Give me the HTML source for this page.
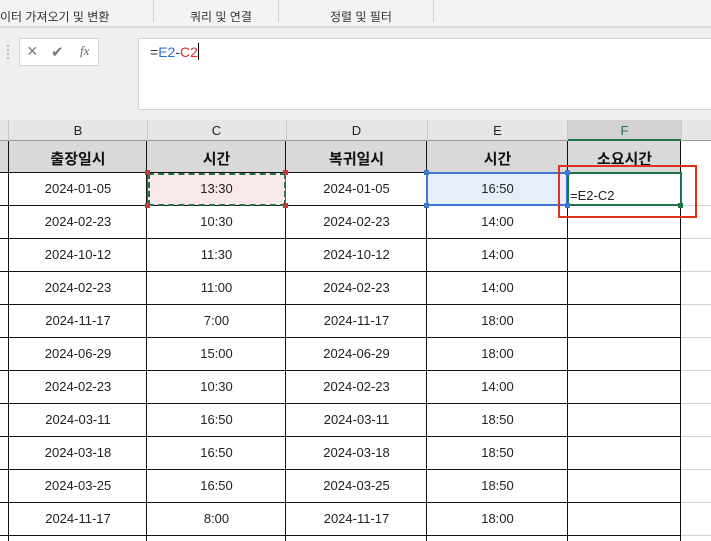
<!DOCTYPE html>
<html><head><meta charset="utf-8"><style>
*{margin:0;padding:0;box-sizing:border-box}
body{width:711px;height:537px;overflow:hidden;background:#fff;position:relative;font-family:"Liberation Sans","Noto Sans CJK KR",sans-serif}
.a{position:absolute}
.t{position:absolute;text-align:center;font-size:13px;color:#222}
</style></head><body>
<div class="a" style="left:0;top:0;width:711px;height:27px;background:#f3f3f3"></div>
<div class="a" style="left:0;top:26px;width:711px;height:2px;background:#dcdcdc"></div>
<div class="a" style="left:153px;top:0;width:1px;height:22px;background:#d0d0d0"></div>
<div class="a" style="left:278px;top:0;width:1px;height:22px;background:#d0d0d0"></div>
<div class="a" style="left:433px;top:0;width:1px;height:22px;background:#d0d0d0"></div>
<div class="t" style="left:0;top:8px;font-size:12px;color:#333">이터 가져오기 및 변환</div>
<div class="t" style="left:190px;top:8px;font-size:12px;color:#333">쿼리 및 연결</div>
<div class="t" style="left:330px;top:8px;font-size:12px;color:#333">정렬 및 필터</div>
<div class="a" style="left:0;top:28px;width:711px;height:92px;background:#efefef"></div>
<div class="a" style="left:7px;top:45px;width:2px;height:14px;border-left:2px dotted #bbb"></div>
<div class="a" style="left:19px;top:38px;width:80px;height:28px;background:#fff;border:1px solid #d6d6d6"></div>
<div class="t" style="left:27px;top:41px;font-size:18px;color:#777">×</div>
<div class="t" style="left:51px;top:43px;font-size:15px;color:#777">✔</div>
<div class="t" style="left:80px;top:43px;font-size:13px;color:#666;font-family:'Liberation Serif',serif;font-style:italic">fx</div>
<div class="a" style="left:138px;top:38px;width:580px;height:72px;background:#fff;border:1px solid #d6d6d6"></div>
<div class="t" style="left:150px;top:43px;font-size:14px;text-align:left"><span style="color:#333">=</span><span style="color:#2e6ecf">E2</span><span style="color:#333">-</span><span style="color:#d03030">C2</span><span style="display:inline-block;width:1px;height:17px;background:#000;vertical-align:-3px"></span></div>
<div class="a" style="left:0;top:120px;width:711px;height:21px;background:#e6e6e6;border-bottom:1px solid #9b9b9b"></div>
<div class="a" style="left:567px;top:120px;width:114px;height:21px;background:#d2d2d2;border-bottom:2px solid #217346"></div>
<div class="t" style="left:9px;top:123px;width:138px">B</div>
<div class="t" style="left:147px;top:123px;width:139px">C</div>
<div class="t" style="left:286px;top:123px;width:141px">D</div>
<div class="t" style="left:427px;top:123px;width:141px">E</div>
<div class="t" style="left:568px;top:123px;width:113px;color:#217346">F</div>
<div class="a" style="left:8px;top:120px;width:1px;height:21px;background:#c8c8c8"></div>
<div class="a" style="left:147px;top:120px;width:1px;height:21px;background:#c8c8c8"></div>
<div class="a" style="left:286px;top:120px;width:1px;height:21px;background:#c8c8c8"></div>
<div class="a" style="left:427px;top:120px;width:1px;height:21px;background:#c8c8c8"></div>
<div class="a" style="left:567px;top:120px;width:1px;height:21px;background:#c8c8c8"></div>
<div class="a" style="left:681px;top:120px;width:1px;height:21px;background:#c8c8c8"></div>
<div class="a" style="left:0;top:141px;width:681px;height:31px;background:#d9d9d9"></div>
<div id="g"></div>
<script>
var cols=[9,147,286,427,568,681];
var B=["2024-01-05","2024-02-23","2024-10-12","2024-02-23","2024-11-17","2024-06-29","2024-02-23","2024-03-11","2024-03-18","2024-03-25","2024-11-17"];
var C=["13:30","10:30","11:30","11:00","7:00","15:00","10:30","16:50","16:50","16:50","8:00"];
var E=["16:50","14:00","14:00","14:00","18:00","18:00","14:00","18:50","18:50","18:50","18:00"];
var h="";
h+='<div class="t" style="left:9px;top:148px;width:138px;font-size:15px;font-weight:bold;color:#111">출장일시</div>';
h+='<div class="t" style="left:147px;top:148px;width:139px;font-size:15px;font-weight:bold;color:#111">시간</div>';
h+='<div class="t" style="left:286px;top:148px;width:141px;font-size:15px;font-weight:bold;color:#111">복귀일시</div>';
h+='<div class="t" style="left:427px;top:148px;width:141px;font-size:15px;font-weight:bold;color:#111">시간</div>';
h+='<div class="t" style="left:568px;top:148px;width:113px;font-size:15px;font-weight:bold;color:#111">소요시간</div>';
h+='<div class="a" style="left:148px;top:173px;width:138px;height:32px;background:#f9e8e8"></div>';
h+='<div class="a" style="left:427px;top:173px;width:141px;height:32px;background:#e6eef9"></div>';
for(var i=0;i<11;i++){var y=172+i*33;
h+='<div class="a" style="left:0;top:'+y+'px;width:681px;height:1px;background:#111"></div>';
h+='<div class="a" style="left:681px;top:'+(y+33)+'px;width:30px;height:1px;background:#d4d4d4"></div>';
h+='<div class="t" style="left:9px;top:'+(y+9)+'px;width:138px">'+B[i]+'</div>';
h+='<div class="t" style="left:147px;top:'+(y+9)+'px;width:139px">'+C[i]+'</div>';
h+='<div class="t" style="left:286px;top:'+(y+9)+'px;width:141px">'+B[i]+'</div>';
h+='<div class="t" style="left:427px;top:'+(y+9)+'px;width:141px">'+E[i]+'</div>';}
h+='<div class="a" style="left:0;top:535px;width:681px;height:1px;background:#111"></div>';
for(var j=0;j<cols.length;j++){h+='<div class="a" style="left:'+(cols[j]-1)+'px;top:141px;width:1px;height:400px;background:#111"></div>';}
h+='<div class="a" style="left:148px;top:173px;width:138px;height:33px;border:2px dashed #217346"></div>';
h+='<div class="a" style="left:147px;top:172px;width:1px;height:34px;background:#c0393b"></div>';
h+='<div class="a" style="left:285px;top:172px;width:1px;height:34px;background:#c0393b"></div>';
[[145,170],[283,170],[145,203],[283,203]].forEach(function(p){h+='<div class="a" style="left:'+p[0]+'px;top:'+p[1]+'px;width:5px;height:5px;background:#c0393b"></div>';});
h+='<div class="a" style="left:426px;top:172px;width:142px;height:34px;border:2px solid #3d78d0"></div>';
[[424,170],[565,170],[424,203],[565,203]].forEach(function(p){h+='<div class="a" style="left:'+p[0]+'px;top:'+p[1]+'px;width:5px;height:5px;background:#3d78d0"></div>';});
h+='<div class="a" style="left:567px;top:172px;width:115px;height:34px;border:2px solid #217346;background:#fff"></div>';
h+='<div class="a" style="left:565px;top:170px;width:5px;height:5px;background:#3d78d0"></div>';
h+='<div class="a" style="left:565px;top:203px;width:5px;height:5px;background:#3d78d0"></div>';
h+='<div class="a" style="left:678px;top:203px;width:5px;height:5px;background:#217346"></div>';
h+='<div class="t" style="left:570px;top:188px;text-align:left;font-size:13px;color:#222">=E2-C2</div>';
h+='<div class="a" style="left:558px;top:165px;width:139px;height:53px;border:2px solid #e0301e"></div>';
document.getElementById("g").innerHTML=h;
</script>
</body></html>
